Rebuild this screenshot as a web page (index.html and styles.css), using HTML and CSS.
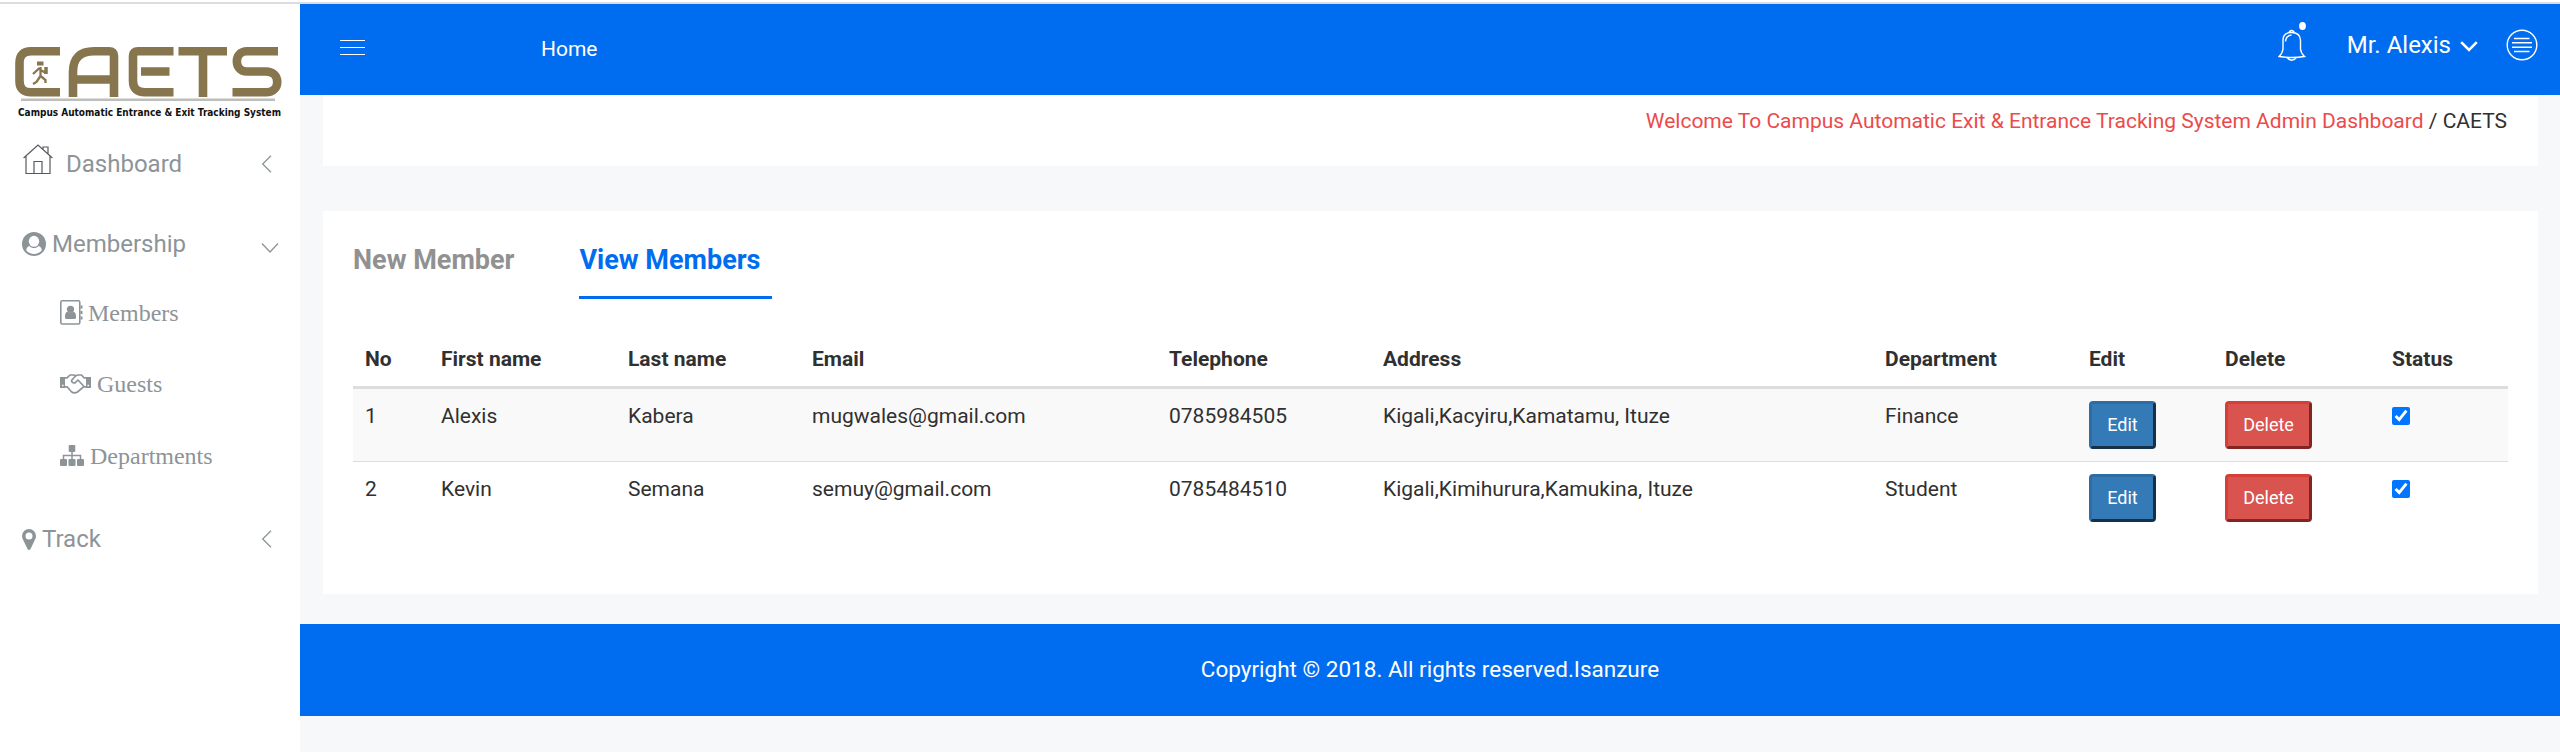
FILE: index.html
```html
<!DOCTYPE html>
<html lang="en">
<head>
<meta charset="utf-8">
<title>CAETS</title>
<link rel="stylesheet" href="styles.css">
</head>
<body>
<div class="app">
  <aside class="sidebar">
    <svg class="logo" viewBox="0 0 300 120">
      <g fill="none" stroke="#86754d" stroke-width="8.600">
        <path d="M60 47.300H31Q19.500 47.300 19.500 59V77Q19.500 88.300 31 88.300H60"/>
        <path d="M73 93V68Q73 47.300 94 47.300H109Q114 47.300 114 52V93M73 75.500H114"/>
        <path d="M173.500 47.300H138Q133 47.300 133 52V77Q133 88.300 145 88.300H173.500M141 67.500H169.500"/>
        <path d="M178.500 47.300H227M203 47.300V93"/>
        <path d="M278 47.300H247C233.500 47.300 233.500 67.500 247 67.500H266C281 67.500 281 88.300 266 88.300H232.500"/>
      </g>
      <path d="M21 95.700H275" stroke="#bcbebb" stroke-width="2.500"/>
      <g fill="none" stroke="#86754d" stroke-width="2.300">
        <path d="M37 59.500H43.500" stroke-width="4"/>
        <path d="M40.500 63V72L45.500 76V79M40.500 72L36.500 78L33 80M39.500 64L33 70M40.500 66L46 69"/>
        <path d="M46 63V70" stroke-width="3.500"/>
      </g>
      <text x="18" y="111.500" textLength="263" lengthAdjust="spacingAndGlyphs">Campus Automatic Entrance &amp; Exit Tracking System</text>
    </svg>
    <nav class="menu">
      <a class="item dashboard">
        <svg class="ic-home" width="30" height="31" viewBox="0 0 30 31" fill="none" stroke="#555a60" stroke-width="1.200"><path d="M.6 14L15 1L29.400 14M3 12V29.500H27V12M11 29.500V17.500H19V29.500M20 5.500V3H25V10"/></svg>
        <span>Dashboard</span>
        <svg class="chev" width="18" height="18" viewBox="0 0 18 18"><path d="M10 .7L1.700 9L10 17.300"/></svg>
      </a>
      <a class="item membership">
        <svg class="ic-user" width="24" height="24" viewBox="0 0 24 24"><circle cx="12" cy="12" r="12" fill="#8d9498"/><path d="M4.200 18.300C4.600 15.800 5.800 14.300 7.400 14C9.800 16.700 14.200 16.700 16.600 14C18.200 14.300 19.400 15.800 19.800 18.300C15.800 23.400 8.200 23.400 4.200 18.300Z" fill="#fff"/><ellipse cx="12" cy="9.300" rx="5.200" ry="5.500" fill="#fff"/></svg>
        <span>Membership</span>
        <svg class="chev down" width="18" height="18" viewBox="0 0 18 18"><path d="M1 4.500L9 13L17 4.500"/></svg>
      </a>
      <a class="item sub members">
        <svg class="ic-book" width="23" height="25" viewBox="0 0 23 25" fill="#8d9498"><rect x=".8" y=".8" width="19" height="23.200" rx="1.500" fill="none" stroke="#8d9498" stroke-width="1.600"/><path d="M20.500 5.500H22.500V8.500H20.500ZM20.500 11H22.500V14H20.500ZM20.500 16.500H22.500V19.500H20.500Z"/><circle cx="10.500" cy="9.300" r="3.600"/><path d="M5 17.500Q4.800 12.500 7.500 11.800Q10.500 14 13.500 11.800Q16.200 12.500 16 17.500Q16 19 14.500 19H6.500Q5 19 5 17.500Z"/></svg>
        <span>Members</span>
      </a>
      <a class="item sub guests">
        <svg class="ic-hands" width="31" height="20" viewBox="0 0 31 20" fill="none" stroke="#8d9498" stroke-width="1.700" stroke-linejoin="round"><path d="M0 3H5V14H0ZM26 3H31V14H26Z" fill="#8d9498" stroke="none"/><path d="M2 11.500H3.500M27.500 11.500H29" stroke="#fff" stroke-width="1.300"/><path d="M5 3.800H7L10 1H14L15.500 2L17.500 1H21.500L24 3.800H26M5 12.800H7L11 17.300Q14 20.300 17.500 18L23.500 12.800H26M15.500 2L11.500 6.500Q12 9.500 15 8.800L18 6L24 12.500"/></svg>
        <span>Guests</span>
      </a>
      <a class="item sub departments">
        <svg class="ic-site" width="24" height="21" viewBox="0 0 24 21" fill="#8d9498"><rect x="8.700" width="6.600" height="7" rx="1"/><rect y="14" width="7" height="7" rx="1"/><rect x="8.500" y="14" width="7" height="7" rx="1"/><rect x="17" y="14" width="7" height="7" rx="1"/><path d="M12 6V15M3.500 15V10.500H20.500V15" fill="none" stroke="#8d9498" stroke-width="1.500"/></svg>
        <span>Departments</span>
      </a>
      <a class="item track">
        <svg class="ic-pin" width="14" height="21" viewBox="0 0 14 21"><path fill="#8d9498" fill-rule="evenodd" d="M7 0A7 7 0 0 1 14 7Q14 8.600 13.300 10L8.500 20Q7 22 5.500 20L.7 10Q0 8.600 0 7A7 7 0 0 1 7 0ZM7 3.500A3.500 3.500 0 1 0 7 10.500A3.500 3.500 0 1 0 7 3.500Z"/></svg>
        <span>Track</span>
        <svg class="chev" width="18" height="18" viewBox="0 0 18 18"><path d="M10 .7L1.700 9L10 17.300"/></svg>
      </a>
    </nav>
  </aside>
  <div class="main">
    <header class="bar">
      <svg class="burger" width="25" height="16" viewBox="0 0 25 16"><path d="M0 1.500H25M0 8.500H25M0 15.500H25"/></svg>
      <span class="home">Home</span>
      <svg class="bell" width="28" height="39" viewBox="0 0 28 39"><path d="M1 34.500Q4.500 31.500 5 27V18Q5 10.500 13.500 10.500T22.500 18V27Q23 31.500 26.500 34.500Q13.500 36.500 1 34.500ZM11.500 10.500V9.500Q13.500 7.500 15.800 9.500V10.500M9 35.800Q13.500 40.500 18.500 35.800M7.500 19.500Q8 13.500 13.500 13"/><ellipse cx="24.500" cy="4" rx="3.400" ry="3.900"/></svg>
      <span class="user">Mr. Alexis</span>
      <svg class="caret" width="18" height="11" viewBox="0 0 18 11"><path d="M1.200 1.200L9 9L16.800 1.200"/></svg>
      <svg class="panel" width="32" height="32" viewBox="0 0 32 32"><circle cx="16" cy="16" r="14.800"/><path d="M8 9.500H23.500M6 13.700H26M6 18.300H26M8 22.500H23.500"/></svg>
    </header>
    <div class="card crumb"><span><a>Welcome To Campus Automatic Exit &amp; Entrance Tracking System Admin Dashboard</a> / CAETS</span></div>
    <section class="card members-card">
      <div class="tabs"><a class="tab">New Member</a><a class="tab active">View Members</a></div>
      <table class="table">
        <colgroup><col class="c-no"><col class="c-first"><col class="c-last"><col class="c-email"><col class="c-tel"><col class="c-addr"><col class="c-dep"><col class="c-edit"><col class="c-del"><col></colgroup>
        <thead><tr><th>No</th><th>First name</th><th>Last name</th><th>Email</th><th>Telephone</th><th>Address</th><th>Department</th><th>Edit</th><th>Delete</th><th>Status</th></tr></thead>
        <tbody>
          <tr class="odd"><td>1</td><td>Alexis</td><td>Kabera</td><td>mugwales@gmail.com</td><td>0785984505</td><td>Kigali,Kacyiru,Kamatamu, Ituze</td><td>Finance</td><td><button class="btn edit">Edit</button></td><td><button class="btn delete">Delete</button></td><td><input type="checkbox" checked></td></tr>
          <tr class="even"><td>2</td><td>Kevin</td><td>Semana</td><td>semuy@gmail.com</td><td>0785484510</td><td>Kigali,Kimihurura,Kamukina, Ituze</td><td>Student</td><td><button class="btn edit">Edit</button></td><td><button class="btn delete">Delete</button></td><td><input type="checkbox" checked></td></tr>
        </tbody>
      </table>
    </section>
    <footer class="footer">Copyright © 2018. All rights reserved.Isanzure</footer>
  </div>
</div>
</body>
</html>
```
FILE: styles.css
```css
* { box-sizing: border-box; }
body { margin: 0; padding-top: 2px; height: 752px; overflow: hidden; font-family: Roboto, sans-serif; font-size: 21px; line-height: 30px; color: #303030; background: #fff; }
.app { display: flex; height: 750px; border-top: 2px solid #dadce0; }
.sidebar { width: 300px; background: #fff; }
.logo { display: block; width: 300px; height: 120px; overflow: visible; }
.logo text { font: bold 10.5px "DejaVu Sans", sans-serif; fill: #111; }

.menu { display: flex; flex-direction: column; font-size: 24px; color: #8d9498; }
.item { display: flex; align-items: center; height: 80px; padding: 0 21px 0 22px; }
.item svg { flex: none; }
.ic-home { margin: -9px 13px 0 1px; }
.ic-user { margin: -1px 6px 0 0; }
.membership { height: 73px; padding-top: 7px; }
.sub { height: 71px; padding-left: 60px; font-family: "Liberation Serif", serif; }
.guests { height: 72px; }
.ic-book { margin-right: 5px; }
.ic-hands { margin-right: 6px; }
.ic-site { margin-right: 6px; }
.track { height: 96px; }
.ic-pin { margin-right: 6px; }
.chev { margin-left: auto; fill: none; stroke: #8d9498; stroke-width: 1.3; }
.down { margin-top: 7px; }

.main { flex: 1; display: flex; flex-direction: column; background: #f6f8fa; }
.bar { display: flex; align-items: flex-start; height: 91px; padding: 18px 22px 0 40px; background: #006df0; color: #fff; }
.bar svg { fill: none; stroke: #fff; stroke-width: 1.4; }
.burger { margin-top: 17px; }
.bar .burger { stroke-width: 1; }
.home { margin: 12px auto 0 176px; }
.bell { margin-right: 41px; }
.bell ellipse { fill: #fff; stroke: none; }
.user { margin-top: 8px; font-size: 24px; }
.caret { margin: 19px 0 0 9px; }
.bar .caret { stroke-width: 2.6; }
.panel { margin: 7px 0 0 28px; }

.card { margin: 0 22px 0 23px; background: #fff; }
.crumb { display: flex; justify-content: flex-end; height: 71px; padding: 11px 31px 0; }
.crumb a { color: #eb4b4b; }
.members-card { height: 383px; margin-top: 45px; padding: 12px 30px 0; }
.tabs { display: flex; gap: 53px; height: 76px; }
.tab { padding: 22px 12px 0 0; font-size: 27px; font-weight: 700; color: #919191; border-bottom: 3px solid transparent; }
.active { color: #006df0; border-color: #006df0; }

.table { width: 2155px; margin-top: 33px; table-layout: fixed; border-collapse: separate; border-spacing: 0; }
.c-no { width: 76px; }
.c-first { width: 187px; }
.c-last { width: 184px; }
.c-email { width: 357px; }
.c-tel { width: 214px; }
.c-addr { width: 502px; }
.c-dep { width: 204px; }
.c-edit { width: 136px; }
.c-del { width: 167px; }
th { padding: 12px; text-align: left; font-weight: 700; border-bottom: 3px solid #ddd; }
td { height: 72px; padding: 12px 12px 0; vertical-align: top; }
.odd td { background: #f9f9f9; }
.even td { height: 73px; border-top: 1px solid #ddd; }
.btn { display: block; height: 48px; padding: 0 0 1px; font: 18px Roboto, sans-serif; color: #fff; border: 3px solid; border-radius: 4px; }
.edit { width: 67px; background: #337ab7; border-color: #2e6da4 #15314a #15314a #2e6da4; }
.delete { width: 87px; background: #d9534f; border-color: #d43f3a #802622 #802622 #d43f3a; }
.odd .btn { padding-bottom: 2px; }
input { display: block; width: 18px; height: 18px; margin: 6px 0 0; }

.footer { height: 92px; margin-top: 30px; padding-top: 30px; text-align: center; font-size: 22.5px; color: #fff; background: #006df0; }
```
